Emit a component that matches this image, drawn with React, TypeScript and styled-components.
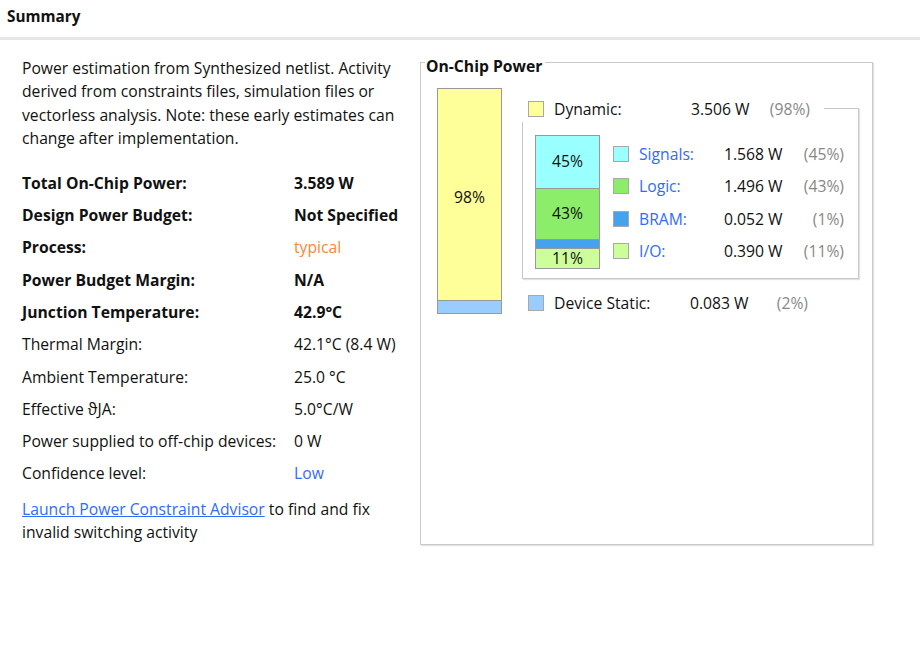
import React from "react";
import styled, { createGlobalStyle } from "styled-components";

const Global = createGlobalStyle`
  html, body { margin: 0; padding: 0; background: #fff; }
  body { font-family: "Open Sans", "Noto Sans", sans-serif; font-size: 15.7px; color: #111; }
  * { box-sizing: border-box; }
`;

const Page = styled.div`
  width: 920px;
  height: 662px;
  background: #fff;
`;

const Header = styled.div`
  height: 40px;
  display: flex;
  align-items: center;
  padding: 0 0 5px 7px;
  border-bottom: 3px solid #e6e6e6;
  font-weight: 700;
  font-size: 15.3px;
`;

const Main = styled.div`
  display: flex;
  align-items: flex-start;
`;

const LeftCol = styled.div`
  width: 420px;
  padding: 17px 0 0 22px;
`;

const Para = styled.p`
  margin: 0;
  line-height: 23.4px;
  width: 385px;
`;

const InfoGrid = styled.div`
  display: grid;
  grid-template-columns: 272px 1fr;
  grid-auto-rows: 32.3px;
  align-items: center;
  margin-top: 16px;
`;

const Cell = styled.div<{ $bold?: boolean; $color?: string }>`
  font-weight: ${(p) => (p.$bold ? 700 : 400)};
  color: ${(p) => p.$color || "#111"};
  white-space: nowrap;
`;

const LinkPara = styled(Para)`
  margin-top: 8px;
`;

const Link = styled.a`
  color: #2f6bff;
  text-decoration: underline;
  cursor: pointer;
`;

const GroupBox = styled.div`
  position: relative;
  margin-top: 22px;
  width: 453px;
  height: 483px;
  border: 1px solid #c9c9c9;
  box-shadow: 1px 1px 1px #e2e2e2;
  padding: 25px 0 0 16px;
  display: flex;
  align-items: flex-start;
`;

const GroupTitle = styled.div`
  position: absolute;
  top: -7px;
  left: 4px;
  padding: 0 3px 0 1px;
  background: #fff;
  font-weight: 700;
  font-size: 15.7px;
  line-height: 20px;
`;

const Bar = styled.div<{ $w: number; $h: number }>`
  width: ${(p) => p.$w}px;
  height: ${(p) => p.$h}px;
  border: 1px solid #999;
  display: flex;
  flex-direction: column;
  flex-shrink: 0;
`;

const Seg = styled.div<{ $color: string; $h: number; $last?: boolean; $shift?: number }>`
  height: ${(p) => p.$h}px;
  background: ${(p) => p.$color};
  border-bottom: ${(p) => (p.$last ? "none" : "1px solid #999")};
  display: flex;
  align-items: center;
  justify-content: center;
  padding-top: ${(p) => p.$shift || 0}px;
  font-size: 15.7px;
  line-height: 1;
`;

const Details = styled.div`
  margin-left: 20px;
  display: flex;
  flex-direction: column;
`;

const DynamicBox = styled.div`
  position: relative;
  margin-top: 20px;
  width: 337px;
  height: 171px;
  border: 1px solid #c9c9c9;
  box-shadow: 1px 1px 1px #e2e2e2;
  padding: 26px 0 0 12px;
  display: flex;
  align-items: flex-start;
`;

const DynamicTitle = styled.div`
  position: absolute;
  top: -15px;
  left: -2px;
  width: 303px;
  height: 28px;
  background: #fff;
  padding: 4px 0 0 7px;
`;

const LegendRow = styled.div<{ $cols: string; $h?: number }>`
  display: grid;
  grid-template-columns: ${(p) => p.$cols};
  align-items: center;
  height: ${(p) => p.$h || 20}px;
  white-space: nowrap;
`;

const Swatch = styled.span<{ $color: string }>`
  width: 16px;
  height: 16px;
  background: ${(p) => p.$color};
  border: 1px solid #a8a8a8;
  display: block;
`;

const Label = styled.span<{ $link?: boolean }>`
  color: ${(p) => (p.$link ? "#2f6bff" : "#111")};
`;

const Value = styled.span``;

const Pct = styled.span`
  color: #888;
  text-align: right;
`;

const SubLegend = styled.div`
  margin-left: 13px;
  margin-top: 3px;
  display: flex;
  flex-direction: column;
`;

const StaticRow = styled(LegendRow)`
  margin-top: 13px;
  padding-left: 6px;
`;

const info: { label: string; value: string; bold?: boolean; color?: string }[] = [
  { label: "Total On-Chip Power:", value: "3.589 W", bold: true },
  { label: "Design Power Budget:", value: "Not Specified", bold: true },
  { label: "Process:", value: "typical", bold: true, color: "#ff8533" },
  { label: "Power Budget Margin:", value: "N/A", bold: true },
  { label: "Junction Temperature:", value: "42.9°C", bold: true },
  { label: "Thermal Margin:", value: "42.1°C (8.4 W)" },
  { label: "Ambient Temperature:", value: "25.0 °C" },
  { label: "Effective \u03D1JA:", value: "5.0°C/W" },
  { label: "Power supplied to off-chip devices:", value: "0 W" },
  { label: "Confidence level:", value: "Low", color: "#2f6bff" },
];

const subItems = [
  { color: "#99ffff", label: "Signals:", value: "1.568 W", pct: "(45%)" },
  { color: "#8ced6a", label: "Logic:", value: "1.496 W", pct: "(43%)" },
  { color: "#45a2ee", label: "BRAM:", value: "0.052 W", pct: "(1%)" },
  { color: "#ccff99", label: "I/O:", value: "0.390 W", pct: "(11%)" },
];

const topCols = "16px 10px 137px 78px 41px";
const subCols = "16px 10px 85px 78px 42px";

export default function App() {
  return (
    <Page>
      <Global />
      <Header>Summary</Header>
      <Main>
        <LeftCol>
          <Para>
            Power estimation from Synthesized netlist. Activity derived from constraints files, simulation
            files or vectorless analysis. Note: these early estimates can change after implementation.
          </Para>
          <InfoGrid>
            {info.map((r) => (
              <React.Fragment key={r.label}>
                <Cell $bold={r.bold}>{r.label}</Cell>
                <Cell $bold={r.bold && !r.color} $color={r.color}>
                  {r.value}
                </Cell>
              </React.Fragment>
            ))}
          </InfoGrid>
          <LinkPara>
            <Link>Launch Power Constraint Advisor</Link> to find and fix invalid switching activity
          </LinkPara>
        </LeftCol>
        <GroupBox>
          <GroupTitle>On-Chip Power</GroupTitle>
          <Bar $w={65} $h={226}>
            <Seg $color="#ffff99" $h={212} $shift={6}>98%</Seg>
            <Seg $color="#99ccff" $h={12} $last />
          </Bar>
          <Details>
            <DynamicBox>
              <DynamicTitle>
                <LegendRow $cols={topCols}>
                  <Swatch $color="#ffff99" />
                  <span />
                  <Label>Dynamic:</Label>
                  <Value>3.506 W</Value>
                  <Pct>(98%)</Pct>
                </LegendRow>
              </DynamicTitle>
              <Bar $w={65} $h={134}>
                <Seg $color="#99ffff" $h={53}>45%</Seg>
                <Seg $color="#8ced6a" $h={51}>43%</Seg>
                <Seg $color="#45a2ee" $h={9} />
                <Seg $color="#ccff99" $h={19} $last>11%</Seg>
              </Bar>
              <SubLegend>
                {subItems.map((s) => (
                  <LegendRow key={s.label} $cols={subCols} $h={32.3}>
                    <Swatch $color={s.color} />
                    <span />
                    <Label $link>{s.label}</Label>
                    <Value>{s.value}</Value>
                    <Pct>{s.pct}</Pct>
                  </LegendRow>
                ))}
              </SubLegend>
            </DynamicBox>
            <StaticRow $cols="16px 10px 136px 78px 40px">
              <Swatch $color="#99ccff" />
              <span />
              <Label>Device Static:</Label>
              <Value>0.083 W</Value>
              <Pct>(2%)</Pct>
            </StaticRow>
          </Details>
        </GroupBox>
      </Main>
    </Page>
  );
}
